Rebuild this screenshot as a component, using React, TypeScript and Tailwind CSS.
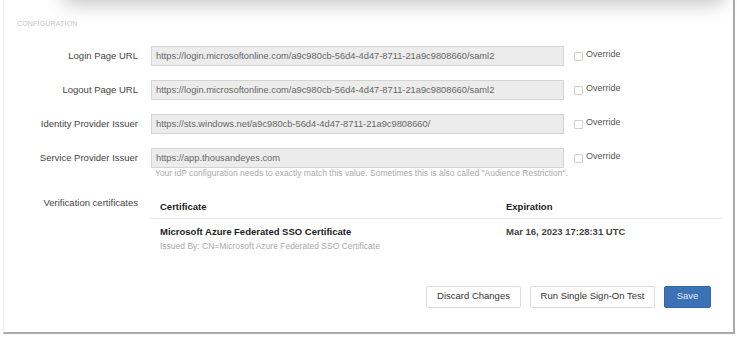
import React from "react";

const rows = [
  { label: "Login Page URL", value: "https://login.microsoftonline.com/a9c980cb-56d4-4d47-8711-21a9c9808660/saml2" },
  { label: "Logout Page URL", value: "https://login.microsoftonline.com/a9c980cb-56d4-4d47-8711-21a9c9808660/saml2" },
  { label: "Identity Provider Issuer", value: "https://sts.windows.net/a9c980cb-56d4-4d47-8711-21a9c9808660/" },
  { label: "Service Provider Issuer", value: "https://app.thousandeyes.com" },
];

function Row({ label, value, last }: { label: string; value: string; last?: boolean }) {
  return (
    <div className={`flex items-start ${last ? "" : "mb-[14px]"}`}>
      <div className="w-[134px] shrink-0 text-right text-[9.5px] leading-[20px] text-[#444]">{label}</div>
      <div className="ml-[13px] w-[413px] shrink-0">
        <div className="h-[20px] border border-[#d4d4d4] bg-[#ececec] px-[4px] text-[9.3px] leading-[18px] text-[#666] overflow-hidden whitespace-nowrap">
          {value}
        </div>
      </div>
      <div className="ml-[10px] flex items-center h-[20px] gap-[3px]">
        <span className="block w-[9px] h-[9px] border border-[#cfcfcf] rounded-[1px] bg-white mt-[2px]" />
        <span className="text-[9px] text-[#555] -mt-[2px]">Override</span>
      </div>
    </div>
  );
}

export default function App() {
  return (
    <div className="w-[737px] h-[337px] bg-white relative overflow-hidden" style={{ fontFamily: '"Liberation Sans", Arial, sans-serif' }}>
      <div className="absolute left-[60px] right-[10px] -top-[30px] h-[30px] bg-white shadow-[0_6px_18px_rgba(0,0,0,0.2)] rounded-full" />
      <div className="absolute left-[3px] top-0 w-[732px] h-[334px] border-l border-l-[#eeeeee] border-r-2 border-r-[#a9a9a9] border-b-2 border-b-[#a9a9a9] pt-[19px]">
        <div className="pl-[13px] text-[7px] tracking-wide text-[#c4c4c4] uppercase">Configuration</div>
        <div className="mt-[16px]">
          {rows.map((r, i) => (
            <Row key={r.label} label={r.label} value={r.value} last={i === rows.length - 1} />
          ))}
          <div className="ml-[151px] -mt-[1px] text-[8.5px] text-[#aaa]">
            Your idP configuration needs to exactly match this value. Sometimes this is also called "Audience Restriction".
          </div>
        </div>
        <div className="flex mt-[16px]">
          <div className="w-[134px] shrink-0 text-right text-[9.5px] text-[#444] leading-[16px]">Verification certificates</div>
          <div className="ml-[12px] w-[572px]">
            <div className="flex border-b border-[#ececec] pb-[3px] pt-[5px] text-[9.5px] font-bold text-[#222]">
              <div className="w-[356px] pl-[10px]">Certificate</div>
              <div>Expiration</div>
            </div>
            <div className="flex pt-[6px]">
              <div className="w-[356px] pl-[10px]">
                <div className="text-[9.5px] font-bold text-[#222]">Microsoft Azure Federated SSO Certificate</div>
                <div className="text-[8.5px] text-[#aaa] mt-[1px]">Issued By: CN=Microsoft Azure Federated SSO Certificate</div>
              </div>
              <div className="text-[9.5px] text-[#444] font-bold">Mar 16, 2023 17:28:31 UTC</div>
            </div>
          </div>
        </div>
        <div className="flex justify-end gap-[9px] pr-[22px] mt-[33px]">
          <button className="h-[22px] w-[95px] border border-[#dcdcdc] rounded-[2px] bg-white text-[9.5px] text-[#333]">Discard Changes</button>
          <button className="h-[22px] w-[125px] border border-[#dcdcdc] rounded-[2px] bg-white text-[9.5px] text-[#333]">Run Single Sign-On Test</button>
          <button className="h-[22px] w-[47px] border border-[#3466a3] rounded-[2px] bg-[#3b72b6] text-[9.5px] text-[#dfe8f5]">Save</button>
        </div>
      </div>
    </div>
  );
}
